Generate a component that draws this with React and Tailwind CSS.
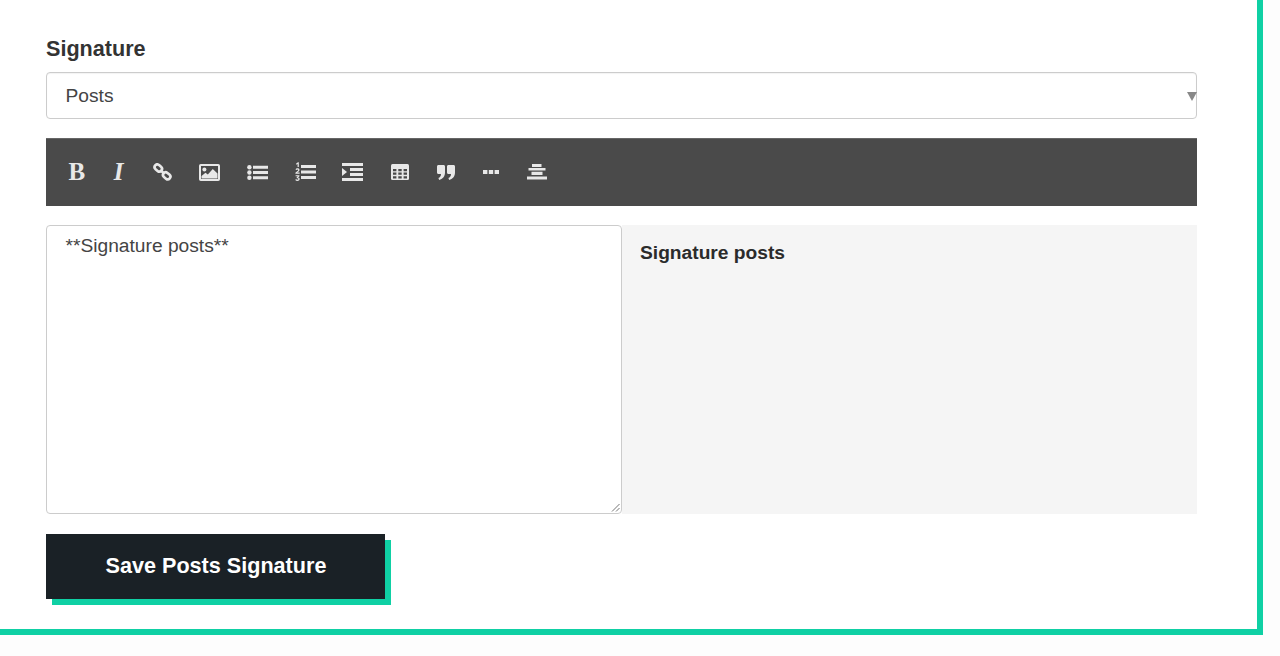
import React from "react";

const Btn = ({ className, children }) => (
  <div className={`flex h-full items-center justify-center text-[#e8e8e8] ${className}`}>{children}</div>
);

export default function App() {
  return (
    <div className="min-h-[656px] w-[1280px] bg-[#fdfdfd] font-['Liberation_Sans',Arial,sans-serif]">
      <div className="h-[635px] w-[1263px] border-r-[6px] border-b-[6px] border-[#0fd0a4] bg-white pt-[37px] pl-[46px]">
        <div className="w-[1151px]">
          <div className="h-[25px] text-[21.6px] leading-[24px] font-bold text-[#333]">Signature</div>
          <div className="relative mt-[10px] flex h-[47px] items-center rounded-[4px] border border-[#ccc] pt-[1px] pl-[18.5px] text-[19.2px] text-[#444] shadow-[inset_0_1px_1px_rgba(0,0,0,0.05)]">
            Posts
            <svg className="absolute top-[19px] right-[-1px]" width="10" height="9" viewBox="0 0 10 9">
              <path d="M0 0H10L5 9Z" fill="#888" />
            </svg>
          </div>
          <div className="mt-[19px] flex h-[68px] items-center border-t border-[#666] bg-[#4a4a4a] pb-[1px] pl-[10px]">
            <Btn className="w-[41.5px] pb-[1px] font-['Liberation_Serif',serif] text-[25px] font-bold">B</Btn>
            <Btn className="w-[42px] pb-[1px] font-['Liberation_Serif',serif] text-[25px] font-bold italic">I</Btn>
            <Btn className="w-[45.5px]">
              <svg width="19" height="18" viewBox="0 0 19 18" fill="none" stroke="#e8e8e8" strokeWidth="2.6">
                <rect x="-4" y="-2.7" width="8" height="5.4" rx="2.7" transform="translate(5.3 5) rotate(40)" />
                <rect x="-4" y="-2.7" width="8" height="5.4" rx="2.7" transform="translate(13.7 12.8) rotate(40)" />
                <path d="M7.5 7 11.5 11" />
              </svg>
            </Btn>
            <Btn className="w-[48.5px]">
              <svg width="21" height="17" viewBox="0 0 21 17">
                <rect x="1" y="1" width="19" height="15" rx="0.8" fill="none" stroke="#e8e8e8" strokeWidth="2" />
                <circle cx="5.4" cy="5.4" r="2" fill="#e8e8e8" />
                <path d="M2.5 14.5V12L6.5 8.8L8.8 10.6L13.8 5L18.5 9.5V14.5Z" fill="#e8e8e8" />
              </svg>
            </Btn>
            <Btn className="w-[48px]">
              <svg width="21" height="15" viewBox="0 0 21 15" fill="#e8e8e8">
                <circle cx="2.4" cy="2.2" r="2.2" /><circle cx="2.4" cy="7.5" r="2.2" /><circle cx="2.4" cy="12.8" r="2.2" />
                <path d="M6 .7H21V3.7H6ZM6 6H21V9H6ZM6 11.3H21V14.3H6Z" />
              </svg>
            </Btn>
            <Btn className="w-[47px]">
              <svg width="21" height="20" viewBox="0 0 21 20" fill="#e8e8e8">
                <path d="M1.2 1.6 3 .3H3.8V5H2.6V1.9L1.2 2.7ZM.5 7.5C.8 6.6 1.6 6.3 2.5 6.3 3.7 6.3 4.5 6.9 4.5 7.9 4.5 9 3.2 9.6 2.2 10.6H4.6V11.7H.4V10.8C1.6 9.5 3.2 8.9 3.2 8 3.2 7.2 1.9 7.2 1.6 8ZM.6 13.2H4.4V14.2L3 15.4C4.1 15.5 4.7 16.1 4.7 17 4.7 18.2 3.6 18.9 2.4 18.9 1.5 18.9.7 18.6.3 18L1 17.1C1.6 17.9 3.4 18 3.4 17 3.4 16.2 2.4 16.2 1.7 16.2V15.3L2.9 14.3H.6Z" />
                <path d="M6 3H21V6H6ZM6 8.5H21V11.5H6ZM6 14H21V17H6Z" />
              </svg>
            </Btn>
            <Btn className="w-[47.5px]">
              <svg width="21" height="18" viewBox="0 0 21 18" fill="#e8e8e8">
                <path d="M0 0H21V3H0ZM8 5H21V8H8ZM8 10H21V13H8ZM0 15H21V18H0ZM0 5L5 9L0 13Z" />
              </svg>
            </Btn>
            <Btn className="w-[47px]">
              <svg width="18" height="16" viewBox="0 0 18 16">
                <rect width="18" height="16" rx="1.5" fill="#e8e8e8" />
                <path d="M2 5H5.4V7.2H2ZM7.3 5H10.7V7.2H7.3ZM12.6 5H16V7.2H12.6ZM2 8.6H5.4V10.8H2ZM7.3 8.6H10.7V10.8H7.3ZM12.6 8.6H16V10.8H12.6ZM2 12.2H5.4V14.4H2ZM7.3 12.2H10.7V14.4H7.3ZM12.6 12.2H16V14.4H12.6Z" fill="#4a4a4a" />
              </svg>
            </Btn>
            <Btn className="w-[45.5px]">
              <svg width="18" height="15" viewBox="0 0 18 15" fill="#e8e8e8">
                <path d="M0 1.5C0 .6.6 0 1.5 0H6.5C7.4 0 8 .6 8 1.5V7.5C8 11.5 5.5 14.2 2.2 15L1.4 13C3 12.4 4 11 4 9H1.5C.6 9 0 8.4 0 7.5ZM10 1.5C10 .6 10.6 0 11.5 0H16.5C17.4 0 18 .6 18 1.5V7.5C18 11.5 15.5 14.2 12.2 15L11.4 13C13 12.4 14 11 14 9H11.5C10.6 9 10 8.4 10 7.5Z" />
              </svg>
            </Btn>
            <Btn className="w-[45.5px]">
              <svg width="16" height="4" viewBox="0 0 16 4" fill="#e8e8e8">
                <rect width="4.4" height="4" /><rect x="5.8" width="4.4" height="4" /><rect x="11.6" width="4.4" height="4" />
              </svg>
            </Btn>
            <Btn className="w-[46px]">
              <svg width="20" height="16" viewBox="0 0 20 16" fill="#e8e8e8">
                <path d="M5 0H14.5V3H5ZM1.5 4H18.5V6.6H1.5ZM4.5 7.8H15.5V11H4.5ZM0 12.6H20V15.6H0Z" />
              </svg>
            </Btn>
          </div>
          <div className="mt-[19px] flex h-[289px]">
            <div className="relative h-full w-[576px] rounded-[4px] border border-[#ccc] pt-[8px] pl-[18.5px] text-[19.2px] leading-[24px] text-[#444]">
              **Signature posts**
              <svg className="absolute right-[1px] bottom-[1px]" width="9" height="9" viewBox="0 0 9 9" stroke="#777" strokeWidth="1">
                <path d="M1 8.5 8.5 1M5 8.5 8.5 5" />
              </svg>
            </div>
            <div className="h-full w-[575px] bg-[#f5f5f5] pt-[15px] pl-[18px] text-[19.2px] leading-[26px] font-bold text-[#2b2b2b]">
              Signature posts
            </div>
          </div>
          <button className="mt-[20px] flex h-[65px] w-[339px] items-center justify-center bg-[#1a2126] pl-[1px] text-[21.6px] font-bold text-white shadow-[6px_6px_0_#0fd0a4]">
            Save Posts Signature
          </button>
        </div>
      </div>
    </div>
  );
}
